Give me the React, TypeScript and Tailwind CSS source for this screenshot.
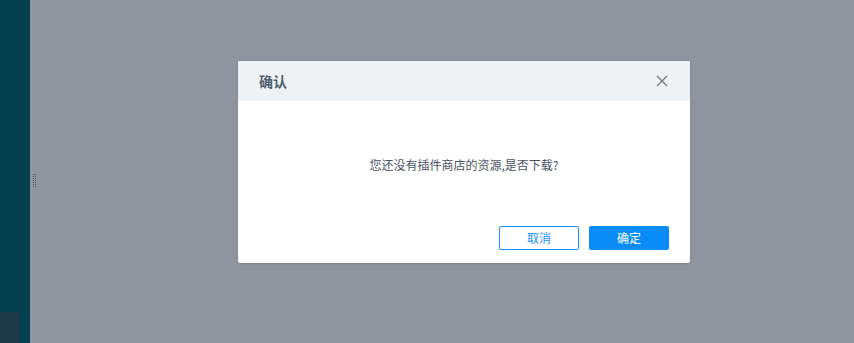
export default function App() {
  return (
    <div
      className="flex h-[343px] w-[854px] overflow-hidden bg-[#8f959e]"
      style={{ fontFamily: '"Noto Sans CJK SC", "Liberation Sans", sans-serif' }}
    >
      <div className="flex w-[30px] shrink-0 flex-col justify-end bg-[#033f4c]">
        <div className="h-[31px] w-[19px] bg-[#1f3b4a]" />
      </div>
      <div className="relative flex flex-1">
        <div className="flex w-[8px] items-center justify-center pt-[17px]">
          <div className="grid grid-cols-2 gap-x-[1px] gap-y-[1px]">
            {Array.from({ length: 14 }).map((_, i) => (
              <div key={i} className="h-[1px] w-[1px] bg-[#4c5868]" />
            ))}
          </div>
        </div>
        <div className="flex flex-1 justify-center pt-[61px] pl-[192px] pr-[156px]">
          <div className="flex h-[202px] w-[452px] flex-col rounded-[2px] bg-white shadow-sm">
            <div className="flex h-[40px] items-center justify-between rounded-t-[2px] bg-[#eef2f5] pl-[21px] pr-[22px]">
              <span className="text-[14px] font-bold text-[#515e6e]">确认</span>
              <svg width="12" height="12" viewBox="0 0 12 12" className="text-[#6c7a8d]">
                <path d="M1 1L11 11M11 1L1 11" stroke="currentColor" strokeWidth="1.3" />
              </svg>
            </div>
            <div className="flex h-[125px] items-center justify-center pt-[3px]">
              <span className="text-[12px] text-[#4a5364]">您还没有插件商店的资源,是否下载?</span>
            </div>
            <div className="flex justify-end gap-[10px] pr-[21px]">
              <button className="h-[24px] w-[80px] rounded-[2px] border border-[#1890ff] bg-white text-[12px] text-[#1890ff]">
                取消
              </button>
              <button className="h-[24px] w-[80px] rounded-[2px] bg-[#0a8cf7] text-[12px] text-white">
                确定
              </button>
            </div>
          </div>
        </div>
      </div>
    </div>
  );
}
